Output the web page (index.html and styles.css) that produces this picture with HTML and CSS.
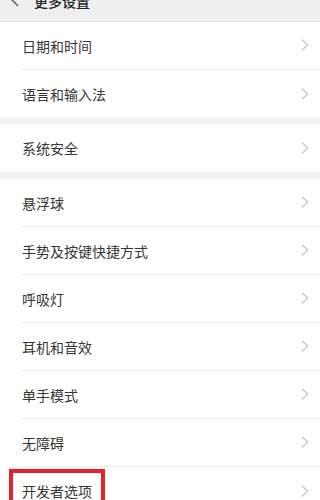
FILE: index.html
```html
<!DOCTYPE html>
<html lang="zh">
<head>
<meta charset="utf-8">
<link rel="stylesheet" href="styles.css">
</head>
<body>
<div class="header">
  <div class="bar">
    <svg class="back" width="8" height="14" viewBox="0 0 8 14"><path d="M7 1 L1 7 L7 13" fill="none" stroke="#444" stroke-width="1.2"/></svg>
    <span class="title">更多设置</span>
  </div>
</div>

<div class="group">
  <div class="row"><span class="label">日期和时间</span><svg class="chev" width="8" height="12" viewBox="0 0 8 12"><path d="M1 0.5 L6.5 6 L1 11.5" fill="none" stroke="#c4c4c4" stroke-width="1.1"/></svg></div>
  <div class="row"><span class="label">语言和输入法</span><svg class="chev" width="8" height="12" viewBox="0 0 8 12"><path d="M1 0.5 L6.5 6 L1 11.5" fill="none" stroke="#c4c4c4" stroke-width="1.1"/></svg></div>
</div>

<div class="group g2">
  <div class="row"><span class="label">系统安全</span><svg class="chev" width="8" height="12" viewBox="0 0 8 12"><path d="M1 0.5 L6.5 6 L1 11.5" fill="none" stroke="#c4c4c4" stroke-width="1.1"/></svg></div>
</div>

<div class="group g3">
  <div class="row"><span class="label">悬浮球</span><svg class="chev" width="8" height="12" viewBox="0 0 8 12"><path d="M1 0.5 L6.5 6 L1 11.5" fill="none" stroke="#c4c4c4" stroke-width="1.1"/></svg></div>
  <div class="row"><span class="label">手势及按键快捷方式</span><svg class="chev" width="8" height="12" viewBox="0 0 8 12"><path d="M1 0.5 L6.5 6 L1 11.5" fill="none" stroke="#c4c4c4" stroke-width="1.1"/></svg></div>
  <div class="row"><span class="label">呼吸灯</span><svg class="chev" width="8" height="12" viewBox="0 0 8 12"><path d="M1 0.5 L6.5 6 L1 11.5" fill="none" stroke="#c4c4c4" stroke-width="1.1"/></svg></div>
  <div class="row"><span class="label">耳机和音效</span><svg class="chev" width="8" height="12" viewBox="0 0 8 12"><path d="M1 0.5 L6.5 6 L1 11.5" fill="none" stroke="#c4c4c4" stroke-width="1.1"/></svg></div>
  <div class="row"><span class="label">单手模式</span><svg class="chev" width="8" height="12" viewBox="0 0 8 12"><path d="M1 0.5 L6.5 6 L1 11.5" fill="none" stroke="#c4c4c4" stroke-width="1.1"/></svg></div>
  <div class="row"><span class="label">无障碍</span><svg class="chev" width="8" height="12" viewBox="0 0 8 12"><path d="M1 0.5 L6.5 6 L1 11.5" fill="none" stroke="#c4c4c4" stroke-width="1.1"/></svg></div>
  <div class="row highlight"><span class="label">开发者选项</span><svg class="chev" width="8" height="12" viewBox="0 0 8 12"><path d="M1 0.5 L6.5 6 L1 11.5" fill="none" stroke="#c4c4c4" stroke-width="1.1"/></svg><span class="mark"></span></div>
</div>
</body>
</html>
```

FILE: styles.css
```css
html, body {
  margin: 0;
  padding: 0;
}
body {
  background: #f2f2f2;
  font-family: "Noto Sans CJK SC", "Noto Sans", sans-serif;
  color: #333;
  width: 320px;
  height: 500px;
  overflow: hidden;
}
.header {
  height: 21px;
  overflow: hidden;
  background: #efefef;
  border-bottom: 1px solid #e2e2e2;
}
.bar {
  height: 48px;
  margin-top: -23px;
  display: flex;
  align-items: center;
  padding-left: 11px;
}
.back {
  display: block;
  margin-top: -2px;
}
.title {
  margin-left: 15px;
  font-size: 14px;
  line-height: 20px;
  color: #222;
  font-weight: 500;
}
.group {
  background: #fff;
}
.g2 {
  margin-top: 6px;
}
.g3 {
  margin-top: 7px;
}
.row {
  position: relative;
  height: 48px;
  display: flex;
  align-items: center;
  justify-content: space-between;
  margin-left: 22px;
  padding-right: 11px;
  box-sizing: border-box;
  border-bottom: 1px solid #ededed;
}
.group .row:last-child {
  border-bottom: none;
}
.label {
  font-size: 14px;
  line-height: 20px;
  color: #363636;
}
.chev {
  display: block;
  margin-top: -1px;
}
.mark {
  position: absolute;
  left: -13px;
  top: 2px;
  width: 88px;
  height: 60px;
  border: 4px solid #e8202a;
}
```
